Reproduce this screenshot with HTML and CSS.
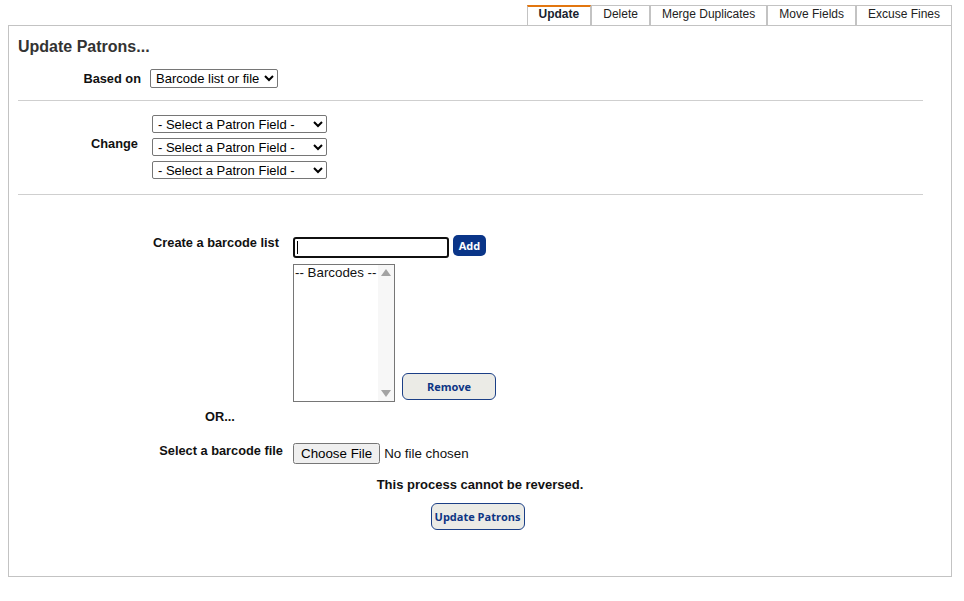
FILE: index.html
```html
<!DOCTYPE html>
<html>
<head>
<meta charset="utf-8">
<title>Update Patrons</title>
<link rel="stylesheet" href="styles.css">
</head>
<body>
<div class="page">
  <div class="tabs">
    <div class="tab active">Update</div>
    <div class="tab">Delete</div>
    <div class="tab">Merge Duplicates</div>
    <div class="tab">Move Fields</div>
    <div class="tab">Excuse Fines</div>
  </div>
  <div class="panel">
    <h1 class="title">Update Patrons...</h1>
    <div class="row based">
      <label class="lbl lbl-based">Based on</label>
      <select class="sel sel-based"><option>Barcode list or file</option></select>
    </div>
    <div class="rule rule-1"></div>
    <div class="row change">
      <label class="lbl lbl-change">Change</label>
      <div class="stack">
        <select class="sel sel-field"><option>- Select a Patron Field -</option></select>
        <select class="sel sel-field"><option>- Select a Patron Field -</option></select>
        <select class="sel sel-field"><option>- Select a Patron Field -</option></select>
      </div>
    </div>
    <div class="rule rule-2"></div>
    <div class="row create">
      <label class="lbl lbl-create">Create a barcode list</label>
      <div class="create-body">
        <div class="add-line">
          <span class="input-wrap"><input class="txt" type="text"><span class="caret"></span></span>
          <button class="btn-add" type="button">Add</button>
        </div>
        <div class="list-line">
          <div class="listbox">
            <div class="opt">-- Barcodes --</div>
            <div class="scroll">
              <span class="arr up"></span>
              <span class="arr down"></span>
            </div>
          </div>
          <button class="btn-soft btn-remove" type="button">Remove</button>
        </div>
      </div>
    </div>
    <div class="or">OR...</div>
    <div class="row filerow">
      <label class="lbl lbl-file">Select a barcode file</label>
      <input class="file" type="file">
    </div>
    <div class="center">
      <p class="warn">This process cannot be reversed.</p>
      <button class="btn-soft btn-update" type="button">Update Patrons</button>
    </div>
  </div>
</div>
</body>
</html>
```
FILE: styles.css
```css
* { box-sizing: border-box; }
html, body { margin: 0; padding: 0; background: #fff; }
body {
  font-family: "Liberation Sans", Arial, sans-serif;
  color: #111;
}
.page { padding: 5px 12px 0 8px; }

.tabs {
  display: flex;
  justify-content: flex-end;
  height: 20px;
}
.tab {
  border: 1px solid #c3c3c3;
  border-bottom: 0;
  padding: 0 11px 2px;
  font-size: 12px;
  line-height: 16px;
  height: 20px;
  color: #222;
  background: #fff;
}
.tab.active {
  border-top: 2px solid #e2760f;
  font-weight: bold;
  line-height: 15px;
  color: #1a1f2e;
}

.panel {
  border: 1px solid #c3c3c3;
  height: 552px;
  padding: 12px 28px 0 9px;
}
.title {
  margin: 0;
  font-size: 16px;
  line-height: 18px;
  font-weight: bold;
  color: #333;
}

.row { display: flex; }
.lbl {
  font-size: 12.8px;
  font-weight: bold;
  color: #111;
  text-align: right;
  line-height: 15px;
  flex: none;
}
.sel {
  font-family: "Liberation Sans", Arial, sans-serif;
  font-size: 13px;
  color: #000;
  background: #fff;
  border: 1px solid #767676;
  border-radius: 2px;
  margin: 0;
  padding: 0 0 0 1px;
}

.based { margin-top: 13px; align-items: center; }
.lbl-based { width: 123px; margin-right: 9px; }
.sel-based { width: 128px; height: 19px; }

.rule { height: 1px; background: #cfcfcf; }
.rule-1 { margin-top: 12px; }
.rule-2 { margin-top: 15px; }

.change { margin-top: 14px; align-items: flex-start; }
.lbl-change { width: 120px; margin-right: 14px; padding-top: 21px; }
.stack { display: flex; flex-direction: column; gap: 5px; }
.sel-field { width: 175px; height: 18px; }

.create { margin-top: 40px; align-items: flex-start; }
.lbl-create { width: 261px; margin-right: 14px; padding-top: 0; }
.create-body { display: flex; flex-direction: column; }
.add-line { display: flex; align-items: flex-start; gap: 4px; }
.input-wrap { position: relative; display: block; margin-top: 2px; }
.txt {
  display: block;
  width: 156px;
  height: 21px;
  border: 2px solid #101010;
  border-radius: 3px;
  margin: 0;
  padding: 0 3px;
  outline: none;
  font-size: 13.33px;
}
.caret {
  position: absolute;
  left: 4px;
  top: 4px;
  width: 1px;
  height: 13px;
  background: #000;
}
.btn-add {
  width: 33px;
  height: 21px;
  margin: 0;
  padding: 0;
  border: 0;
  border-radius: 5px;
  background: #0a3588;
  color: #fff;
  font-family: "Open Sans", sans-serif;
  font-weight: 700;
  font-size: 11px;
  line-height: 21px;
}
.list-line { display: flex; align-items: flex-end; gap: 7px; margin-top: 6px; }
.listbox {
  width: 102px;
  height: 138px;
  border: 1px solid #767676;
  display: flex;
  background: #fff;
}
.opt {
  flex: 1;
  font-size: 13.33px;
  line-height: 15px;
  padding-left: 1px;
  color: #111;
  white-space: nowrap;
}
.scroll {
  width: 16px;
  background: #f7f7f7;
  position: relative;
  flex: none;
}
.arr {
  position: absolute;
  left: 3px;
  width: 0;
  height: 0;
  border-left: 5px solid transparent;
  border-right: 5px solid transparent;
}
.arr.up { top: 4px; border-bottom: 7px solid #a3a3a3; }
.arr.down { bottom: 4px; border-top: 7px solid #a3a3a3; }

.btn-soft {
  margin: 0;
  padding: 0;
  background: #ebebe6;
  border: 1px solid #1b3f86;
  border-radius: 6px;
  color: #0d3584;
  font-family: "Open Sans", sans-serif;
  font-weight: 700;
  font-size: 11px;
}
.btn-remove { width: 94px; height: 27px; margin-bottom: 2px; }

.or {
  margin-top: 7px;
  padding-left: 187px;
  font-size: 12.8px;
  font-weight: bold;
  line-height: 15px;
}

.filerow { margin-top: 19px; align-items: flex-start; }
.lbl-file { width: 265px; margin-right: 10px; }
.file {
  font-family: "Liberation Sans", Arial, sans-serif;
  font-size: 13.33px;
  margin: 0;
}

.center {
  margin: 13px -28px 0 -9px;
  display: flex;
  flex-direction: column;
  align-items: center;
}
.warn {
  margin: 0;
  font-size: 13px;
  font-weight: bold;
  line-height: 16px;
  color: #111;
}
.btn-update { margin-top: 10px; margin-right: 5px; width: 94px; height: 27px; }
```
